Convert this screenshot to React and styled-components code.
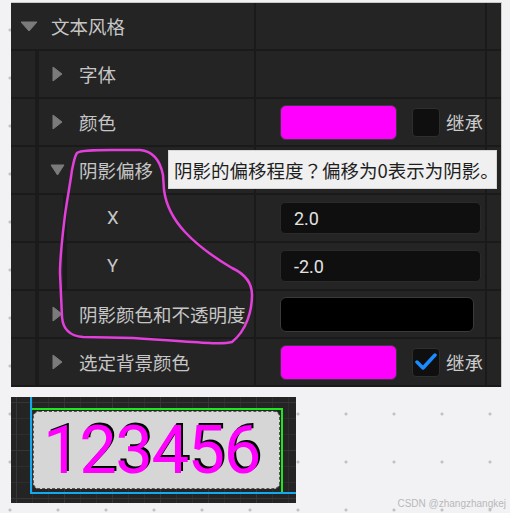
import React from "react";
import styled, { createGlobalStyle } from "styled-components";

const GlobalStyle = createGlobalStyle`
  html, body {
    margin: 0;
    padding: 0;
  }
  body {
    width: 510px;
    height: 513px;
    overflow: hidden;
    background-color: #f2f2f4;
    background-image: radial-gradient(circle, #c2c2c6 1.3px, transparent 1.8px);
    background-size: 48px 48px;
    background-position: -14px 6px;
    font-family: Roboto, "Noto Sans CJK SC", sans-serif;
  }
`;

const Page = styled.div`
  position: relative;
  width: 510px;
  height: 513px;
  box-sizing: border-box;
  padding: 2px 0 0 11px;
  display: flex;
  flex-direction: column;
  gap: 10px;
`;

const Panel = styled.div`
  position: relative;
  width: 491px;
  box-sizing: border-box;
  background: #242424;
  border-top: 1px solid #c9c9c9;
  border-right: 1px solid #c9c9c9;
  display: flex;
  flex-direction: column;
`;

const Row = styled.div`
  display: flex;
  height: 48px;
  box-sizing: border-box;
  border-bottom: 2px solid #1a1a1a;
`;

const NameArea = styled.div`
  width: 245px;
  flex: none;
  display: flex;
  box-sizing: border-box;
  border-right: 2px solid #1a1a1a;
`;

const Gutter = styled.div`
  width: 28px;
  flex: none;
  box-sizing: border-box;
  border-right: 4px solid #1b1b1b;
`;

const Expander = styled.div`
  width: 40px;
  flex: none;
  box-sizing: border-box;
  padding-left: 5px;
  display: flex;
  align-items: center;
`;

const IconBox = styled.div`
  width: 26px;
  display: flex;
  justify-content: center;
  align-items: center;
`;

const Label = styled.span`
  align-self: center;
  font-size: 18.5px;
  color: #c6c6c6;
  white-space: nowrap;
`;

const ValueCell = styled.div`
  width: 231px;
  flex: none;
  box-sizing: border-box;
  border-right: 2px solid #1a1a1a;
  padding-left: 24px;
  display: flex;
  align-items: center;
`;

const EndCell = styled.div`
  flex: 1;
`;

const Swatch = styled.div`
  width: ${(p) => p.$w}px;
  height: 35px;
  box-sizing: border-box;
  border-radius: 6px;
  background: ${(p) => p.$color};
  border: 1px solid #3a3a3a;
`;

const CheckBox = styled.div`
  width: 28px;
  height: 29px;
  margin-left: 15px;
  box-sizing: border-box;
  background: #0f0f0f;
  border: 1px solid #2e2e2e;
  border-radius: 4px;
  display: flex;
  align-items: center;
  justify-content: center;
`;

const Inherit = styled.span`
  margin-left: 6px;
  font-size: 18.5px;
  color: #cbcbcb;
`;

const NumberInput = styled.div`
  width: 201px;
  height: 32px;
  box-sizing: border-box;
  background: #0f0f0f;
  border: 1px solid #2a2a2a;
  border-radius: 5px;
  padding-left: 13px;
  font-size: 18px;
  color: #e2e2e2;
  display: flex;
  align-items: center;
`;

const Tooltip = styled.div`
  position: absolute;
  left: 157px;
  top: 147px;
  width: 329px;
  height: 39px;
  box-sizing: border-box;
  padding-left: 5px;
  background: #f0f0f0;
  border: 1px solid #d6d6d6;
  color: #1e1e1e;
  font-family: "Noto Sans CJK SC", sans-serif;
  font-size: 18.5px;
  white-space: nowrap;
  display: flex;
  align-items: center;
`;

const Punct = styled.span`
  font-family: "Noto Sans CJK JP", sans-serif;
`;

const Annotation = styled.svg`
  position: absolute;
  left: 0;
  top: 0;
  pointer-events: none;
`;

const Canvas = styled.div`
  position: relative;
  width: 285px;
  height: 106px;
  background-color: #242424;
  background-image: linear-gradient(#363636 1px, transparent 1px),
    linear-gradient(90deg, #363636 1px, transparent 1px),
    linear-gradient(#2e2e2e 1px, transparent 1px),
    linear-gradient(90deg, #2e2e2e 1px, transparent 1px);
  background-size: 48px 48px, 48px 48px, 16px 16px, 16px 16px;
  background-position: 0 5px, 5px 0, 0 5px, 5px 0;
  overflow: hidden;
`;

const Guide = styled.div`
  position: absolute;
  background: ${(p) => p.$color};
`;

const TextBox = styled.div`
  position: absolute;
  left: 22px;
  top: 14px;
  width: 247px;
  height: 78px;
  box-sizing: border-box;
  background: #d6d6d6;
  border: 1px dashed #555;
  border-radius: 6px;
  padding-left: 9px;
  display: flex;
  align-items: center;
`;

const ShadowText = styled.span`
  font-family: Roboto, sans-serif;
  font-size: 67px;
  font-weight: 400;
  letter-spacing: -1.5px;
  color: #ff00ff;
  text-shadow: 2px -2px 0 #000;
  line-height: 1;
`;

const Watermark = styled.span`
  position: absolute;
  right: 4px;
  bottom: 4px;
  font-family: "Liberation Sans", sans-serif;
  font-size: 10px;
  color: #b8b8bc;
`;

const TriDown = ({ big }) =>
  big ? (
    <svg width="18" height="11" viewBox="0 0 18 11">
      <path d="M1 1 L17 1 L9 10 Z" fill="#7b7b7b" stroke="#7b7b7b" strokeLinejoin="round" />
    </svg>
  ) : (
    <svg width="15" height="12" viewBox="0 0 15 12">
      <path d="M1 1 L14 1 L7.5 11 Z" fill="#7b7b7b" stroke="#7b7b7b" strokeLinejoin="round" />
    </svg>
  );

const TriRight = () => (
  <svg width="11" height="16" viewBox="0 0 11 16">
    <path d="M1 1 L10 8 L1 15 Z" fill="#7b7b7b" stroke="#7b7b7b" strokeLinejoin="round" />
  </svg>
);

const Check = () => (
  <svg width="22" height="20" viewBox="0 0 22 20">
    <path d="M2 10 L8 16 L20 3" fill="none" stroke="#1a8cff" strokeWidth="3.5" strokeLinecap="round" strokeLinejoin="round" />
  </svg>
);

const rows = [
  { depth: 0, expand: "down", big: true, label: "文本风格" },
  { depth: 1, expand: "right", label: "字体" },
  { depth: 1, expand: "right", label: "颜色", value: { kind: "color", color: "#ff00ff", checked: false } },
  { depth: 1, expand: "down", label: "阴影偏移" },
  { depth: 2, label: "X", value: { kind: "number", text: "2.0" } },
  { depth: 2, label: "Y", value: { kind: "number", text: "-2.0" } },
  { depth: 1, expand: "right", label: "阴影颜色和不透明度", value: { kind: "swatch", color: "#000" } },
  { depth: 1, expand: "right", label: "选定背景颜色", value: { kind: "color", color: "#ff00ff", checked: true } },
];

function Value({ value }) {
  if (!value) return null;
  if (value.kind === "number") return <NumberInput>{value.text}</NumberInput>;
  if (value.kind === "swatch") return <Swatch $w={194} $color={value.color} />;
  return (
    <>
      <Swatch $w={117} $color={value.color} />
      <CheckBox>{value.checked && <Check />}</CheckBox>
      <Inherit>继承</Inherit>
    </>
  );
}

function PropertyRow({ row }) {
  const gutters = [];
  for (let i = 0; i < row.depth; i++) gutters.push(<Gutter key={i} />);
  return (
    <Row>
      <NameArea>
        {gutters}
        <Expander>
          <IconBox>
            {row.expand === "down" && <TriDown big={row.big} />}
            {row.expand === "right" && <TriRight />}
          </IconBox>
        </Expander>
        <Label>{row.label}</Label>
      </NameArea>
      <ValueCell>
        <Value value={row.value} />
      </ValueCell>
      <EndCell />
    </Row>
  );
}

export default function App() {
  return (
    <>
      <GlobalStyle />
      <Page>
        <Panel>
          {rows.map((r, i) => (
            <PropertyRow key={i} row={r} />
          ))}
          <Tooltip>
            阴影的偏移程度<Punct>？</Punct>偏移为0表示为阴影。
          </Tooltip>
        </Panel>
        <Canvas>
          <Guide $color="#14a8f0" style={{ left: 19, top: 0, width: 2, height: 97 }} />
          <Guide $color="#14a8f0" style={{ left: 19, top: 95, right: 0, height: 2 }} />
          <Guide $color="#1ee61e" style={{ left: 21, top: 11, width: 251, height: 2 }} />
          <Guide $color="#1ee61e" style={{ left: 270, top: 11, width: 2, height: 84 }} />
          <TextBox>
            <ShadowText>123456</ShadowText>
          </TextBox>
        </Canvas>
        <Annotation width="510" height="513" viewBox="0 0 510 513">
          <path
            d="M77 153 C80 150 95 150 112 150 L140 150 C152 151 160 160 163 175 L164 190 C166 205 172 218 185 232 C200 248 215 258 232 268 C245 274 252 282 252 295 C252 310 247 330 232 342 C220 345 200 342 133 338 L83 337 C70 336 63 330 62 317 L60 273 C60 255 62 240 65 215 C67 200 70 185 72 170 C74 160 75 155 77 153"
            fill="none"
            stroke="#e23fdb"
            strokeWidth="2.5"
            strokeLinecap="round"
          />
        </Annotation>
        <Watermark>CSDN @zhangzhangkej</Watermark>
      </Page>
    </>
  );
}
